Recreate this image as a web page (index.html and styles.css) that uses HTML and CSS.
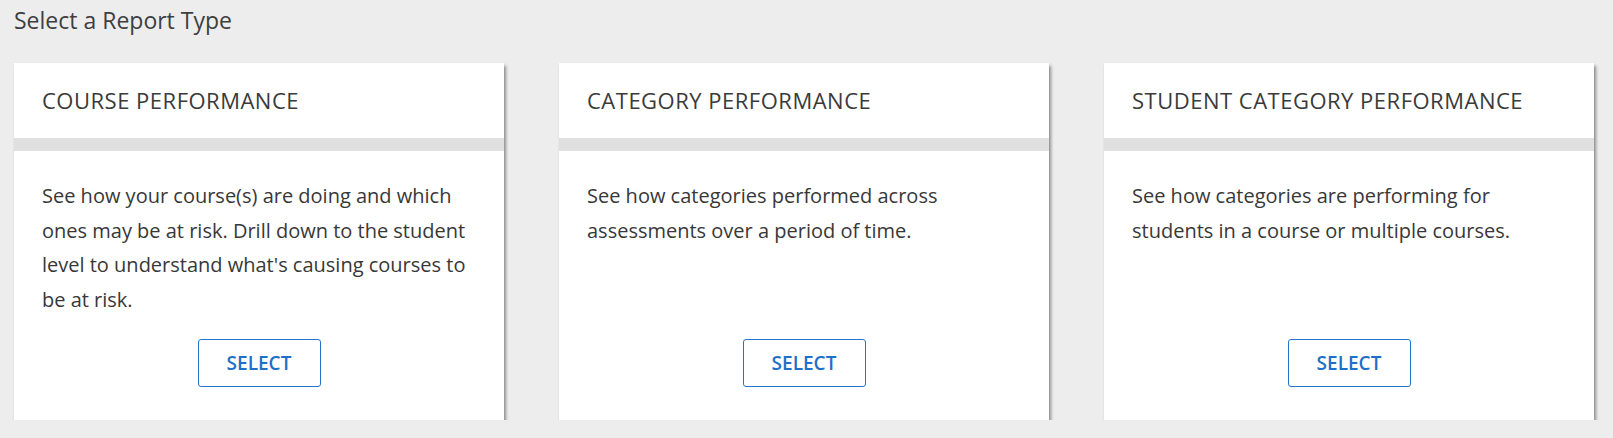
FILE: index.html
```html
<!DOCTYPE html>
<html>
<head>
<meta charset="utf-8">
<link rel="stylesheet" href="styles.css">
</head>
<body>
<div class="page">
  <h1 class="page-title">Select a Report Type</h1>
  <div class="cards">
    <div class="card">
      <div class="card-head">COURSE PERFORMANCE</div>
      <div class="card-body">
        <p class="card-text">See how your course(s) are doing and which ones may be at risk. Drill down to the student level to understand what's causing courses to be at risk.</p>
        <div class="card-actions"><button class="btn">SELECT</button></div>
      </div>
    </div>
    <div class="card">
      <div class="card-head">CATEGORY PERFORMANCE</div>
      <div class="card-body">
        <p class="card-text">See how categories performed across assessments over a period of time.</p>
        <div class="card-actions"><button class="btn">SELECT</button></div>
      </div>
    </div>
    <div class="card">
      <div class="card-head">STUDENT CATEGORY PERFORMANCE</div>
      <div class="card-body">
        <p class="card-text">See how categories are performing for students in a course or multiple courses.</p>
        <div class="card-actions"><button class="btn">SELECT</button></div>
      </div>
    </div>
  </div>
</div>
</body>
</html>
```

FILE: styles.css
```css
html, body {
  margin: 0;
  padding: 0;
  background: #ededed;
}
body {
  font-family: "Open Sans", Lato, sans-serif;
  color: #383838;
}
.page {
  padding: 5px 14px 0 14px;
}
.page-title {
  margin: 0;
  font-size: 23px;
  font-weight: 400;
  line-height: 30px;
  color: #3f3f3f;
}
.cards {
  display: flex;
  gap: 55px;
  margin-top: 28px;
}
.card {
  flex: none;
  width: 490px;
  height: 357px;
  background: #fff;
  box-shadow: 2px 3px 3px rgba(0, 0, 0, 0.4), 0 0 1px rgba(0, 0, 0, 0.08);
  display: flex;
  flex-direction: column;
}
.card-head {
  height: 88px;
  box-sizing: border-box;
  padding: 22px 28px 0 28px;
  font-size: 22px;
  letter-spacing: 0.5px;
  line-height: 30px;
  border-bottom: 13px solid #e0e0e0;
  color: #3a3a3a;
}
.card-body {
  flex: 1;
  display: flex;
  flex-direction: column;
  padding: 0 28px 33px 28px;
}
.card-text {
  margin: 28px 0 0 0;
  font-size: 20px;
  line-height: 34.5px;
  flex: 1;
}
.card-actions {
  display: flex;
  justify-content: center;
}
.btn {
  width: 123px;
  height: 48px;
  background: #fff;
  border: 1px solid #2176cc;
  border-radius: 3px;
  color: #1f70c8;
  font-family: "Open Sans", Lato, sans-serif;
  font-weight: 600;
  font-size: 19px;
  padding: 0;
}
```
